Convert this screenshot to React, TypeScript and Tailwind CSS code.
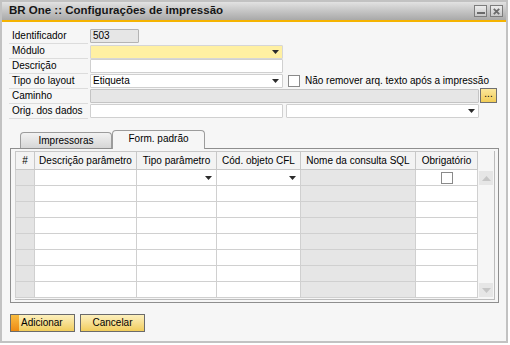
import React from 'react';

const columns = [
  { label: '#', w: 'w-[20px]', cell: 'bg-[#e4e4e4]' },
  { label: 'Descrição parâmetro', w: 'w-[102px]', cell: 'bg-white' },
  { label: 'Tipo parâmetro', w: 'w-[80px]', cell: 'bg-white' },
  { label: 'Cód. objeto CFL', w: 'w-[84px]', cell: 'bg-white' },
  { label: 'Nome da consulta SQL', w: 'w-[115px]', cell: 'bg-[#e6e6e6]' },
  { label: 'Obrigatório', w: 'w-[62px]', cell: 'bg-white' },
];

const rows = [0, 1, 2, 3, 4, 5, 6, 7];

function DropArrow() {
  return (
    <svg width="7" height="4" viewBox="0 0 7 4" className="shrink-0">
      <path d="M0 0H7L3.5 4Z" fill="#2b2b2b" />
    </svg>
  );
}

function Label({ text }: { text: string }) {
  return (
    <div className="w-[79px] h-[15px] border-b border-[#dcdcdc] pl-[3px] leading-[14px] text-black">
      {text}
    </div>
  );
}

function Field({
  className,
  text,
  arrow,
}: {
  className: string;
  text?: string;
  arrow?: boolean;
}) {
  return (
    <div
      className={`h-[14px] border rounded-[1px] flex items-center pl-[2px] pr-[3px] leading-[12px] ${className}`}
    >
      <span className="flex-1 truncate">{text}</span>
      {arrow && <DropArrow />}
    </div>
  );
}

function Checkbox() {
  return <div className="w-[12px] h-[12px] border border-[#8a8a8a] bg-white" />;
}

function ScrollButton({ up }: { up?: boolean }) {
  return (
    <div className="w-[14px] h-[14px] bg-[#e6e6e6] flex items-center justify-center">
      <svg width="9" height="5" viewBox="0 0 9 5">
        <path d={up ? 'M0 5H9L4.5 0Z' : 'M0 0H9L4.5 5Z'} fill="#c6c6c6" />
      </svg>
    </div>
  );
}

export default function App() {
  return (
    <div className="w-[510px] h-[345px] bg-white font-['Liberation_Sans',Arial,sans-serif] text-[10px] text-black">
      <div className="w-[508px] h-[343px] border-2 border-[#c2c2c2] bg-[#f6f6f6] flex flex-col">
        {/* title bar */}
        <div className="h-[20px] shrink-0 border-b-2 border-[#f5b300] bg-linear-to-b from-[#e2e2e2] to-[#a9a9a9] flex items-center pl-[7px] pr-[3px]">
          <span className="flex-1 font-bold text-[11.5px] text-[#161616] leading-none">
            BR One :: Configurações de impressão
          </span>
          <div className="flex gap-[3px]">
            <div className="w-[13px] h-[12px] border border-[#7c7c7c] bg-linear-to-b from-[#ececec] to-[#c8c8c8] flex items-end justify-center pb-[2px]">
              <div className="w-[8px] h-[2px] bg-[#6a6a6a]" />
            </div>
            <div className="w-[13px] h-[12px] border border-[#7c7c7c] bg-linear-to-b from-[#ececec] to-[#c8c8c8] flex items-center justify-center">
              <svg width="7" height="7" viewBox="0 0 7 7">
                <path d="M0.8 0.8L6.2 6.2M6.2 0.8L0.8 6.2" stroke="#6a6a6a" strokeWidth="1.8" />
              </svg>
            </div>
          </div>
        </div>

        {/* header form */}
        <div className="ml-[7px] mt-[7px] flex flex-col">
          <div className="flex h-[15px]">
            <Label text="Identificador" />
            <Field className="ml-[2px] w-[49px] bg-[#e6e6e6] border-[#b4b4b4]" text="503" />
          </div>
          <div className="flex h-[15px]">
            <Label text="Módulo" />
            <Field className="ml-[2px] mt-px w-[193px] bg-[#fff0a2] border-[#d6d6d6]" arrow />
          </div>
          <div className="flex h-[15px]">
            <Label text="Descrição" />
            <Field className="ml-[2px] w-[193px] bg-white border-[#d0d0d0]" />
          </div>
          <div className="flex h-[15px] items-start">
            <Label text="Tipo do layout" />
            <Field className="ml-[2px] w-[193px] bg-white border-[#d0d0d0]" text="Etiqueta" arrow />
            <div className="ml-[5px] mt-[1px]">
              <Checkbox />
            </div>
            <span className="ml-[5px] leading-[14px]">Não remover arq. texto após a impressão</span>
          </div>
          <div className="flex h-[15px] items-start">
            <Label text="Caminho" />
            <Field className="ml-[2px] w-[389px] bg-[#e6e6e6] border-[#c4c4c4]" />
            <div className="ml-[1px] -mt-px w-[17px] h-[15px] border border-[#707070] bg-linear-to-b from-[#fbe79a] to-[#f2cd55] flex items-center justify-center leading-none pb-[3px]">
              ...
            </div>
          </div>
          <div className="flex h-[15px]">
            <Label text="Orig. dos dados" />
            <Field className="ml-[2px] w-[193px] bg-white border-[#d0d0d0]" />
            <Field className="ml-[3px] w-[193px] bg-white border-[#d0d0d0]" arrow />
          </div>
        </div>

        {/* tabs */}
        <div className="mt-[11px] -mb-px ml-[18px] h-[19px] flex items-end relative z-10">
          <div className="w-[92px] h-[16px] mb-px border border-b-0 border-[#9c9c9c] rounded-t-[4px] bg-linear-to-b from-[#f2f2f2] to-[#d6d6d6] flex items-center justify-center leading-none">
            Impressoras
          </div>
          <div className="w-[93px] h-[19px] border border-b-0 border-[#9c9c9c] rounded-t-[4px] bg-[#f6f6f6] flex items-center justify-center leading-none pb-[2px]">
            Form. padrão
          </div>
        </div>

        {/* tab panel */}
        <div className="ml-[8px] w-[489px] h-[155px] border border-[#8e8e8e] pl-[4px] pt-[2px]">
          <div className="w-[480px] h-[149px] border-r border-b border-[#bcbcbc] flex flex-col">
            <div className="flex h-[19px]">
              {columns.map((c, i) => (
                <div
                  key={c.label}
                  className={`${c.w} h-[19px] border-t border-b border-r border-[#c8c8c8] ${
                    i === 0 ? 'border-l' : ''
                  } bg-[#f3f3f3] flex items-center justify-center whitespace-nowrap leading-none`}
                >
                  {c.label}
                </div>
              ))}
            </div>
            <div className="flex">
              <div className="flex flex-col">
                {rows.map((r) => (
                  <div key={r} className="flex h-[16px]">
                    {columns.map((c, i) => (
                      <div
                        key={c.label}
                        className={`${c.w} h-[16px] border-b border-r border-[#d0d0d0] ${
                          i === 0 ? 'border-l' : ''
                        } ${c.cell} flex items-center justify-end pr-[4px]`}
                      >
                        {r === 0 && (i === 2 || i === 3) && <DropArrow />}
                        {r === 0 && i === 5 && (
                          <div className="mr-[20px]">
                            <Checkbox />
                          </div>
                        )}
                      </div>
                    ))}
                  </div>
                ))}
              </div>
              <div className="w-[16px] h-[128px] flex flex-col justify-between pl-px py-px">
                <ScrollButton up />
                <ScrollButton />
              </div>
            </div>
          </div>
        </div>

        {/* buttons */}
        <div className="ml-[8px] mt-[11px] flex gap-[5px]">
          <div className="w-[65px] h-[18px] border border-[#6b6b6b] bg-linear-to-b from-[#fdf0bd] to-[#f1cd5a] flex">
            <div className="w-[8px] h-full bg-linear-to-b from-[#f9bd40] to-[#ec8a10]" />
            <span className="ml-[2px] leading-[16px]">Adicionar</span>
          </div>
          <div className="w-[65px] h-[18px] border border-[#6b6b6b] bg-linear-to-b from-[#fdf0bd] to-[#f1cd5a] flex items-center justify-center leading-none">
            Cancelar
          </div>
        </div>
      </div>
    </div>
  );
}
